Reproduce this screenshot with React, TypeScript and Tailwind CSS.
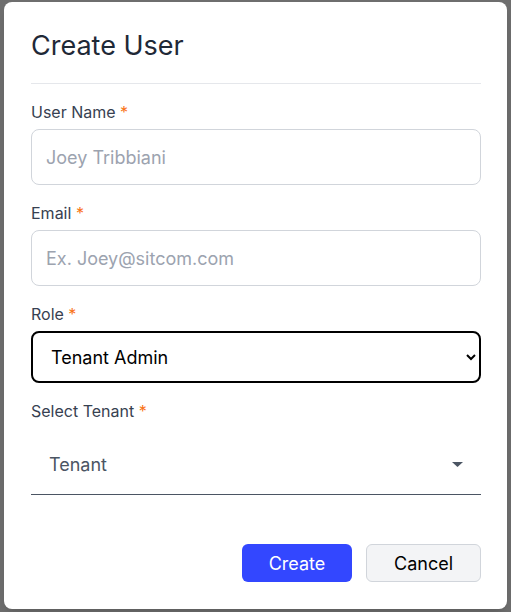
import * as React from "react"

function Label({ children }: { children: React.ReactNode }) {
  return (
    <label className="block text-[16px] leading-5 font-normal text-[#374151]">
      {children} <span className="text-[#f97316]">*</span>
    </label>
  )
}

export default function App() {
  return (
    <div className="h-[612px] w-[511px] overflow-hidden bg-[#6e6e6e] pt-[2px] pl-[4px]" style={{ fontFamily: "Inter, 'Noto Sans', sans-serif" }}>
      <div className="flex h-[607px] w-[503px] flex-col rounded-lg bg-white pl-[27px] pr-[26px] pt-[28px] shadow-lg">
        <h1 className="text-[27px] leading-8 font-normal text-[#1f2937]">Create User</h1>
        <div className="mt-[21px] h-px bg-[#e5e7eb]" />

        <div className="mt-[18px]">
          <Label>User Name</Label>
          <input
            placeholder="Joey Tribbiani"
            className="mt-[7px] h-[56px] w-full rounded-lg border border-[#d1d5db] px-[14px] text-[18px] text-[#111827] placeholder:text-[#9ca3af] outline-none"
          />
        </div>

        <div className="mt-[18px]">
          <Label>Email</Label>
          <input
            placeholder="Ex. Joey@sitcom.com"
            className="mt-[7px] h-[56px] w-full rounded-lg border border-[#d1d5db] px-[14px] text-[18px] text-[#111827] placeholder:text-[#9ca3af] outline-none"
          />
        </div>

        <div className="mt-[18px]">
          <Label>Role</Label>
          <select
            defaultValue="tenant-admin"
            className="mt-[7px] h-[52px] w-full rounded-lg border-2 border-black bg-white pl-[14px] pr-[6px] text-[18px] text-black outline-none"
          >
            <option value="tenant-admin">Tenant Admin</option>
            <option value="super-admin">Super Admin</option>
            <option value="user">User</option>
          </select>
        </div>

        <div className="mt-[18px]">
          <Label>Select Tenant</Label>
          <div className="mt-[9px] flex h-[65px] items-center border-b border-[#4b5563] pt-[4px] pl-[18px] pr-[18px]">
            <span className="flex-1 text-[18px] text-[#4b5563]">Tenant</span>
            <svg width="11" height="5" viewBox="0 0 11 5" className="text-[#4b5563]">
              <path d="M0 0 L11 0 L5.5 5 Z" fill="currentColor" />
            </svg>
          </div>
        </div>

        <div className="mt-[49px] flex justify-end gap-[14px]">
          <button className="h-[38px] w-[110px] rounded-md bg-[#3347ff] text-[18px] text-white">Create</button>
          <button className="h-[38px] w-[115px] rounded-md border border-[#d1d5db] bg-[#f3f4f6] text-[18px] text-black">Cancel</button>
        </div>
      </div>
    </div>
  )
}
